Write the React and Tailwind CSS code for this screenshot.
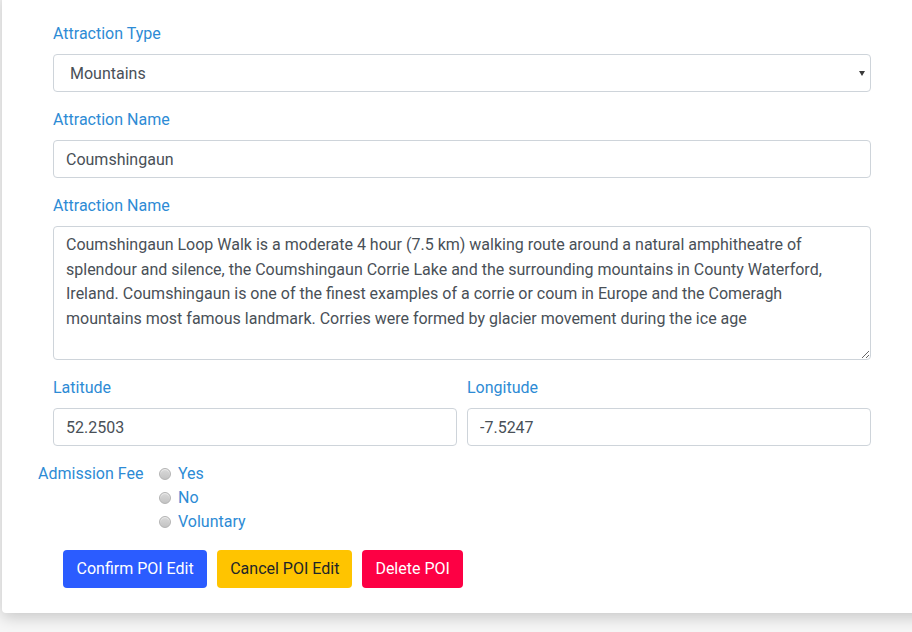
import { useState } from 'react';

const description =
  'Coumshingaun Loop Walk is a moderate 4 hour (7.5 km) walking route around a natural amphitheatre of splendour and silence, the Coumshingaun Corrie Lake and the surrounding mountains in County Waterford, Ireland. Coumshingaun is one of the finest examples of a corrie or coum in Europe and the Comeragh mountains most famous landmark. Corries were formed by glacier movement during the ice age';

const inputCls =
  'block w-full h-[38px] rounded-[4px] border border-[#ced4da] bg-white px-3 text-[16px] text-[#495057] outline-none';

function Label({ children }) {
  return <label className="block h-6 leading-6 mb-[8px] text-[#2d8bd5]">{children}</label>;
}

function Radio({ label, checked, onChange }) {
  return (
    <label className="flex items-center h-6 leading-6 text-[#2d8bd5] cursor-pointer" onClick={onChange}>
      <span className="mr-[7px] ml-[1px] size-[12px] rounded-full border border-[#b3b3b3] bg-[linear-gradient(#d9d9d9,#c4c4c4)] shadow-[inset_0_1px_1px_rgba(255,255,255,0.6)] flex items-center justify-center">
        {checked && <span className="size-[5px] rounded-full bg-[#444]" />}
      </span>
      {label}
    </label>
  );
}

export default function App() {
  const [fee, setFee] = useState(null);

  return (
    <div className="h-[632px] overflow-hidden bg-[#f6f6f6] font-['Roboto',sans-serif] text-[16px]">
      <div className="ml-[2px] -mt-[8px] w-[940px] rounded-[4px] bg-white shadow-[0_4px_16px_rgba(0,0,0,0.2)] pt-[30px] pb-[25px]">
        <div className="pl-[51px] w-[869px]">
          <div className="mb-[16px]">
            <Label>Attraction Type</Label>
            <div className="relative">
              <select
                defaultValue="Mountains"
                className="block w-full h-[38px] appearance-none rounded-[4px] border border-[#ced4da] bg-white pl-[16px] pt-[1px] text-[16px] text-[#495057] outline-none"
              >
                <option>Mountains</option>
                <option>Lakes</option>
                <option>Beaches</option>
              </select>
              <svg className="absolute right-[6px] top-[17px] pointer-events-none" width="6" height="5" viewBox="0 0 6 5">
                <path d="M0 0h6L3 5z" fill="#3a3a3a" />
              </svg>
            </div>
          </div>

          <div className="mb-[16px]">
            <Label>Attraction Name</Label>
            <input className={inputCls} defaultValue="Coumshingaun" />
          </div>

          <div className="mb-[16px]">
            <Label>Attraction Name</Label>
            <textarea
              className="block w-full h-[134px] rounded-[4px] border border-[#ced4da] bg-white px-3 py-[6px] text-[16px] leading-[24.5px] text-[#495057] outline-none"
              defaultValue={description}
            />
          </div>

          <div className="grid grid-cols-2 gap-[10px] mb-[16px]">
            <div>
              <Label>Latitude</Label>
              <input className={inputCls} defaultValue="52.2503" />
            </div>
            <div>
              <Label>Longitude</Label>
              <input className={inputCls} defaultValue="-7.5247" />
            </div>
          </div>
        </div>

        <div className="flex pl-[36px]">
          <div className="w-[120px] h-6 leading-6 text-[#2d8bd5]">Admission Fee</div>
          <div className="flex flex-col">
            <Radio label="Yes" checked={fee === 'yes'} onChange={() => setFee('yes')} />
            <Radio label="No" checked={fee === 'no'} onChange={() => setFee('no')} />
            <Radio label="Voluntary" checked={fee === 'vol'} onChange={() => setFee('vol')} />
          </div>
        </div>

        <div className="flex gap-[10px] pl-[61px] mt-[16px]">
          <button className="h-[38px] rounded-[4px] bg-[#2b5cff] px-[13.5px] text-white">Confirm POI Edit</button>
          <button className="h-[38px] rounded-[4px] bg-[#ffc400] px-[13px] text-[#212529]">Cancel POI Edit</button>
          <button className="h-[38px] rounded-[4px] bg-[#fd0044] px-[13px] text-white">Delete POI</button>
        </div>
      </div>
    </div>
  );
}
